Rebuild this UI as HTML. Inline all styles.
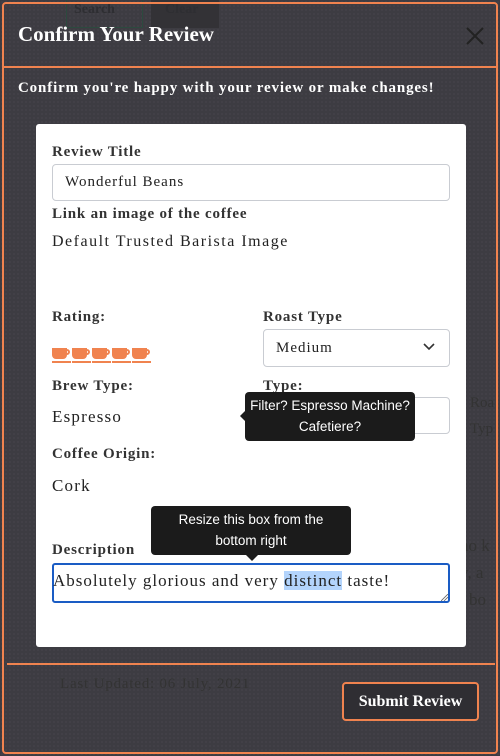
<!DOCTYPE html>
<html><head><style>
*{box-sizing:border-box;margin:0;padding:0}
body{width:500px;height:756px;overflow:hidden;background:#3d3c42;background-image:radial-gradient(#4d4c52 0.7px,transparent 0.8px);background-size:4px 4px;font-family:"Liberation Serif",serif;position:relative}
.a{position:absolute}
.modal{left:2px;top:2px;width:496px;height:752px;border:2px solid #f0834f;border-radius:4px}
.lbl{font-weight:bold;color:#333;font-size:15px;letter-spacing:0.8px}
.val{color:#222;font-size:17px;letter-spacing:1.2px}
.inp{border:1px solid #c9ccd2;border-radius:4px;background:#fff;font-size:15px;color:#222;padding-left:12px;display:flex;align-items:center;letter-spacing:1px}
.tip{background:#1b1b1b;color:#fff;font-family:"Liberation Sans",sans-serif;font-size:13.5px;text-align:center;border-radius:4px;line-height:21px;padding-top:3px}
</style></head><body>
<div class="a" style="left:66px;top:0;width:77px;height:28px;border:1px solid #2c4a3e;border-top:none"></div>
<div class="a" style="left:74px;top:2px;color:#2e2e32;font-weight:bold;font-size:14px">Search</div>
<div class="a" style="left:151px;top:0;width:68px;height:28px;background:#333236"></div>
<div class="a" style="left:165px;top:2px;color:#2e2e32;font-weight:bold;font-size:14px">Clear</div>
<div class="a modal"></div>
<div class="a" style="left:2px;top:66px;width:496px;height:2px;background:#f0834f"></div>
<div class="a" style="left:18px;top:22px;color:#fff;font-weight:bold;font-size:21px">Confirm Your Review</div>
<svg class="a" style="left:466px;top:27px" width="18" height="18"><path d="M1 1L17 17M17 1L1 17" stroke="#222" stroke-width="2"/></svg>
<div class="a" style="left:18px;top:80px;color:#fff;font-weight:bold;font-size:15px;letter-spacing:0.85px">Confirm you're happy with your review or make changes!</div>
<div class="a" style="left:60px;top:676px;color:#333;font-size:15px;letter-spacing:0.8px">Last Updated: 06 July, 2021</div>
<div class="a" style="left:470px;top:390px;color:#333;font-size:15px;line-height:26px">Roa<br>Typ</div>
<div class="a" style="left:460px;top:532px;color:#333;font-size:17px;line-height:27px">no k<br>v, a<br>: bo</div>
<div class="a" style="left:7px;top:663px;width:488px;height:2px;background:#f0834f"></div>
<div class="a" style="left:342px;top:682px;width:137px;height:39px;border:2px solid #f0834f;border-radius:4px;background:#2f2e33;color:#fff;font-weight:bold;font-size:16px;display:flex;align-items:center;justify-content:center">Submit Review</div>
<div class="a" style="left:36px;top:124px;width:430px;height:523px;background:#fff;border-radius:3px"></div>
<div class="a lbl" style="left:52px;top:144px">Review Title</div>
<div class="a inp" style="left:52px;top:164px;width:398px;height:37px">Wonderful Beans</div>
<div class="a lbl" style="left:52px;top:206px">Link an image of the coffee</div>
<div class="a val" style="left:52px;top:233px;font-size:16px;letter-spacing:1.5px">Default Trusted Barista Image</div>
<div class="a lbl" style="left:52px;top:309px">Rating:</div>
<div class="a" style="left:52px;top:348px">
<svg width="100" height="16"><g fill="#f0834f">
<path d="M0 0h15v7a4 4 0 0 1-4 4H4a4 4 0 0 1-4-4zM13 1h2a3 3 0 0 1 0 6h-2v-2h2a1 1 0 0 0 0-2h-2z"/><rect x="0" y="13" width="19" height="2"/>
<path transform="translate(20 0)" d="M0 0h15v7a4 4 0 0 1-4 4H4a4 4 0 0 1-4-4zM13 1h2a3 3 0 0 1 0 6h-2v-2h2a1 1 0 0 0 0-2h-2z"/><rect x="20" y="13" width="19" height="2"/>
<path transform="translate(40 0)" d="M0 0h15v7a4 4 0 0 1-4 4H4a4 4 0 0 1-4-4zM13 1h2a3 3 0 0 1 0 6h-2v-2h2a1 1 0 0 0 0-2h-2z"/><rect x="40" y="13" width="19" height="2"/>
<path transform="translate(60 0)" d="M0 0h15v7a4 4 0 0 1-4 4H4a4 4 0 0 1-4-4zM13 1h2a3 3 0 0 1 0 6h-2v-2h2a1 1 0 0 0 0-2h-2z"/><rect x="60" y="13" width="19" height="2"/>
<path transform="translate(80 0)" d="M0 0h15v7a4 4 0 0 1-4 4H4a4 4 0 0 1-4-4zM13 1h2a3 3 0 0 1 0 6h-2v-2h2a1 1 0 0 0 0-2h-2z"/><rect x="80" y="13" width="19" height="2"/>
</g></svg></div>
<div class="a lbl" style="left:263px;top:309px">Roast Type</div>
<div class="a inp" style="left:263px;top:329px;width:187px;height:38px">Medium</div>
<svg class="a" style="left:423px;top:343px" width="12" height="8"><path d="M1 1l5 5 5-5" stroke="#333" stroke-width="1.6" fill="none"/></svg>
<div class="a lbl" style="left:52px;top:378px">Brew Type:</div>
<div class="a lbl" style="left:263px;top:378px">Type:</div>
<div class="a val" style="left:52px;top:407px">Espresso</div>
<div class="a inp" style="left:263px;top:397px;width:187px;height:37px;color:#555">Arabica</div>
<div class="a val" style="left:52px;top:476px">Cork</div>
<div class="a lbl" style="left:52px;top:446px">Coffee Origin:</div>
<div class="a tip" style="left:245px;top:392px;width:170px;height:49px">Filter? Espresso Machine?<br>Cafetiere?</div>
<div class="a" style="left:240px;top:410px;width:0;height:0;border-top:6px solid transparent;border-bottom:6px solid transparent;border-right:6px solid #1b1b1b"></div>
<div class="a lbl" style="left:52px;top:542px">Description</div>
<div class="a tip" style="left:151px;top:506px;width:200px;height:49px">Resize this box from the<br>bottom right</div>
<div class="a" style="left:246px;top:555px;width:0;height:0;border-left:6px solid transparent;border-right:6px solid transparent;border-top:6px solid #1b1b1b"></div>
<div class="a" style="left:52px;top:563px;width:398px;height:40px;border:2px solid #1a5cc4;border-radius:3px;background:#fff"></div>
<div class="a val" style="left:53px;top:571px;letter-spacing:1px">Absolutely glorious and very <span style="background:#b3d4fc">distinct</span> taste!</div>
<svg class="a" style="left:441px;top:594px" width="7" height="7"><path d="M0 7L7 0M3 7L7 3" stroke="#666" stroke-width="0.8"/></svg>
</body></html>
